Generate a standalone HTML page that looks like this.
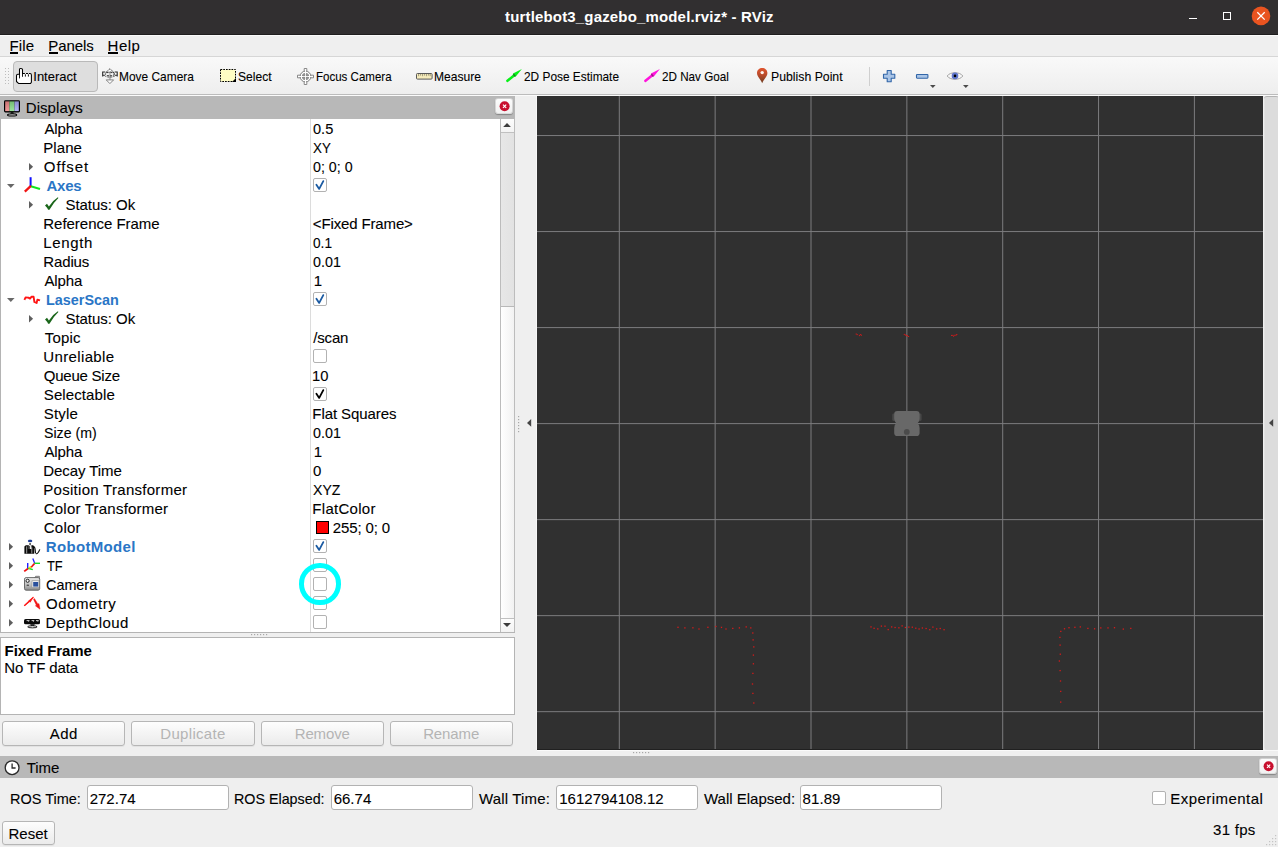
<!DOCTYPE html><html><head><meta charset="utf-8"><title>RViz</title><style>
*{box-sizing:border-box;margin:0;padding:0}
html,body{width:1278px;height:847px;overflow:hidden;background:#efefef;}
body{position:relative;font-family:"Liberation Sans",sans-serif;font-size:15px;color:#000;}
.a{position:absolute;white-space:nowrap;}
.x{position:absolute;white-space:nowrap;height:20px;line-height:20px;-webkit-text-stroke:0.1px currentColor;}
.b{font-weight:bold}
.blue{color:#2a76c6;font-weight:bold}
.cb{position:absolute;width:14px;height:14px;border:1px solid #b2b2b2;border-radius:2px;background:#fff;}
.btn{position:absolute;border:1px solid #b6b6b6;border-radius:3px;background:linear-gradient(#fdfdfd,#ebebeb);box-shadow:0 1px 0 rgba(0,0,0,0.05)}
.inp{position:absolute;border:1px solid #b2b2b2;border-radius:3px;background:#fff;}
svg{position:absolute;overflow:visible}
</style></head><body>
<div class="a" style="left:0;top:0;width:1278px;height:35px;background:#312f30;border-bottom:1px solid #1f1e1e"></div>
<div class="x b" style="top:7px;height:19px;line-height:19px;font-size:15px;left:505.02px;letter-spacing:0.163px;color:#fff;-webkit-text-stroke:0px currentColor;">turtlebot3_gazebo_model.rviz* - RViz</div>
<div class="a" style="left:1188.8px;top:17.6px;width:8.2px;height:1.7px;background:#fff"></div>
<div class="a" style="left:1222.8px;top:11.8px;width:8.4px;height:8.4px;border:1.3px solid #fff"></div>
<svg style="left:1251px;top:6px" width="20" height="20"><circle cx="10" cy="9.9" r="9.3" fill="#e95420"/><path d="M6.3 6.2 L13.7 13.6 M13.7 6.2 L6.3 13.6" stroke="#fff" stroke-width="1.3" fill="none"/></svg>
<div class="a" style="left:0;top:35px;width:1278px;height:22px;background:#efefef;border-top:1px solid #fbfbfb;border-bottom:1px solid #d6d6d6"></div>
<div class="x" style="top:36px;height:19px;line-height:19px;font-size:15px;left:9.57px;letter-spacing:0.142px;">File</div>
<div class="x" style="top:36px;height:19px;line-height:19px;font-size:15px;left:48.37px;letter-spacing:-0.078px;">Panels</div>
<div class="x" style="top:36px;height:19px;line-height:19px;font-size:15px;left:107.57px;letter-spacing:0.504px;">Help</div>
<div class="a" style="left:10px;top:52px;width:8.0px;height:1.9px;background:#000"></div>
<div class="a" style="left:49px;top:52px;width:9.1px;height:1.9px;background:#000"></div>
<div class="a" style="left:108.1px;top:52px;width:9.8px;height:1.9px;background:#000"></div>
<div class="a" style="left:0;top:57px;width:1278px;height:38px;background:linear-gradient(#f9f9f9,#eeeeee);border-bottom:1px solid #bcbcbc"></div>
<div class="a" style="left:0;top:95px;width:1278px;height:1px;background:#fbfbfb"></div>
<div class="a" style="left:5px;top:68px;width:5px;height:17px;background:radial-gradient(circle at 0.5px 0.5px,#bdbdbd 0.6px,transparent 0.9px) 0 0/3px 3px"></div>
<div class="a" style="left:13px;top:61px;width:85px;height:31px;border:1px solid #b9b9b9;border-radius:4px;background:#dedede"></div>
<div class="x" style="top:68px;height:17px;line-height:17px;font-size:13px;left:33.30px;letter-spacing:-0.009px;">Interact</div>
<div class="x" style="top:68px;height:17px;line-height:17px;font-size:13px;left:119.22px;transform:scaleX(0.9172);transform-origin:0 0;">Move Camera</div>
<div class="x" style="top:68px;height:17px;line-height:17px;font-size:13px;left:237.65px;transform:scaleX(0.9310);transform-origin:0 0;">Select</div>
<div class="x" style="top:68px;height:17px;line-height:17px;font-size:13px;left:315.65px;transform:scaleX(0.8862);transform-origin:0 0;">Focus Camera</div>
<div class="x" style="top:68px;height:17px;line-height:17px;font-size:13px;left:433.61px;transform:scaleX(0.9298);transform-origin:0 0;">Measure</div>
<div class="x" style="top:68px;height:17px;line-height:17px;font-size:13px;left:523.80px;transform:scaleX(0.9133);transform-origin:0 0;">2D Pose Estimate</div>
<div class="x" style="top:68px;height:17px;line-height:17px;font-size:13px;left:661.91px;transform:scaleX(0.8985);transform-origin:0 0;">2D Nav Goal</div>
<div class="x" style="top:68px;height:17px;line-height:17px;font-size:13px;left:771.49px;transform:scaleX(0.9435);transform-origin:0 0;">Publish Point</div>
<svg style="left:16px;top:68px" width="16" height="16"><path d="M3.5 6.3 V1.6 Q3.5 0.4 5 0.4 Q6.5 0.4 6.5 1.6 V5.5 H14 Q15.4 5.5 15.4 7 V14.3 L14.6 15.4 H2.5 L0.5 13.5 V7.7 Q0.5 6.3 1.9 6.3 Z" fill="#fff" stroke="#000" stroke-width="1.05" stroke-linejoin="round"/><path d="M3.5 6 V10.4 M6.5 5.5 V8.8 M9.4 6.1 V8.6 M12.4 6.1 V8.6" stroke="#000" stroke-width="0.9"/><path d="M8.9 5.5 H10 M12 5.5 H12.9" stroke="#e4e4e4" stroke-width="1.3"/></svg>
<svg style="left:102px;top:68px" width="17" height="17"><path d="M3.7 4.6 L7.9 0.8 L12.2 4.6 Z" fill="#fdfdfd" stroke="#3c3c3c" stroke-width="1" stroke-linejoin="round" stroke-dasharray="1.5 0.7"/><rect x="6.9" y="4.2" width="2" height="8" fill="#bcbcbc"/><path d="M0.6 3.9 H3 V7.2 H0.6 Z" fill="#fff" stroke="none"/><path d="M3.2 4 H0.7 V8.6 M0.7 7.2 H2.8" fill="none" stroke="#262626" stroke-width="1.1"/><path d="M15.2 3.9 H12.8 V7.2 H15.2 Z" fill="#fff" stroke="none"/><path d="M12.7 4 H15.2 V8.6 M15.2 7.2 H13" fill="none" stroke="#262626" stroke-width="1.1"/><ellipse cx="7.9" cy="5.95" rx="4.7" ry="1.9" fill="none" stroke="#333" stroke-width="1" stroke-dasharray="2.2 0.9"/><path d="M2.5 7.6 C4.6 9.7 11 9.7 13.2 7.6" fill="none" stroke="#505050" stroke-width="0.9" stroke-dasharray="2.2 0.8"/><path d="M4.2 11.9 L7.9 15.6 L11.6 11.9 Z" fill="#fdfdfd" stroke="#858585" stroke-width="1" stroke-linejoin="round"/></svg>
<svg style="left:220px;top:69px" width="16" height="13"><rect x="0.5" y="0.5" width="15" height="12" fill="#fffdc4" stroke="#000" stroke-width="1" stroke-dasharray="1.7 1.05"/><path d="M16 9 L16 13 L12 13 Z" fill="#000"/></svg>
<svg style="left:297px;top:68px" width="17" height="17"><path d="M7.2 0.5 H9.8 V7.2 H16.5 V9.8 H9.8 V16.5 H7.2 V9.8 H0.5 V7.2 H7.2 Z" fill="#fff" stroke="#7c7c7c" stroke-width="0.9"/><circle cx="8.5" cy="8.5" r="5.4" fill="#fcfcfc" stroke="#7c7c7c" stroke-width="1"/><circle cx="8.5" cy="8.5" r="3.5" fill="#747474"/><path d="M8.5 1.2 V15.8 M1.2 8.5 H15.8" stroke="#fff" stroke-width="1.1"/><path d="M6.9 5 V12 M10.1 5 V12 M5 6.9 H12 M5 10.1 H12" stroke="#b0b0b0" stroke-width="0.5"/></svg>
<svg style="left:416px;top:72.7px" width="17" height="7"><rect x="0.5" y="0.5" width="15.6" height="5.6" rx="0.9" fill="#f6ecbc" stroke="#585858" stroke-width="1"/><path d="M2.6 1 V3.2 M4.6 1 V2.6 M6.6 1 V3.2 M8.6 1 V2.6 M10.6 1 V3.2 M12.6 1 V2.6 M14.2 1 V3.2" stroke="#8a8468" stroke-width="0.8"/></svg>
<svg style="left:506px;top:69px" width="16" height="14"><path d="M0.1 11.3 L7.5 5.2 L7 4.6 L15.9 0 L9.6 7.8 L9.1 7.2 L1.7 13.2 Q0 13.4 0.1 11.3 Z" fill="#08f018"/><path d="M7.3 5.1 L9.3 7.5" stroke="#0f7a1c" stroke-width="1.5" stroke-opacity="0.85"/></svg>
<svg style="left:644px;top:69px" width="16" height="14"><path d="M0.1 11.3 L7.5 5.2 L7 4.6 L15.9 0 L9.6 7.8 L9.1 7.2 L1.7 13.2 Q0 13.4 0.1 11.3 Z" fill="#ff14dc"/><path d="M7.3 5.1 L9.3 7.5" stroke="#8a1478" stroke-width="1.5" stroke-opacity="0.85"/></svg>
<svg style="left:756.6px;top:68px" width="11" height="16"><defs><linearGradient id="pg" x1="0" y1="0" x2="0" y2="1"><stop offset="0" stop-color="#e0552f"/><stop offset="0.5" stop-color="#b4492a"/><stop offset="1" stop-color="#6b3a1d"/></linearGradient></defs><path d="M5.2 15.3 C4.2 12 0 9 0 5.1 C0 2 2.4 0 5.2 0 C8 0 10.4 2 10.4 5.1 C10.4 9 6.2 12 5.2 15.3 Z" fill="url(#pg)"/><circle cx="5.2" cy="4.6" r="1.7" fill="#fdf3ee"/></svg>
<svg style="left:882.8px;top:69.8px" width="13" height="13"><path d="M4.2 0.5 H8.2 V4.2 H11.8 V8.2 H8.2 V11.8 H4.2 V8.2 H0.5 V4.2 H4.2 Z" fill="#a9c4e6" stroke="#3266a8" stroke-width="1.1" stroke-linejoin="round"/></svg>
<svg style="left:915.9px;top:73.6px" width="13" height="5"><rect x="0.5" y="0.5" width="11.4" height="3.7" rx="0.6" fill="#a9c4e6" stroke="#3266a8" stroke-width="1.1"/></svg>
<svg style="left:930.2px;top:85px" width="6" height="3"><path d="M0 0 H5.6 L2.8 2.9 Z" fill="#4a4a4a"/></svg>
<svg style="left:963.3px;top:85px" width="6" height="3"><path d="M0 0 H5.6 L2.8 2.9 Z" fill="#4a4a4a"/></svg>
<svg style="left:947px;top:71px" width="16" height="10"><path d="M0.2 5 C3 0.6 13 0.6 15.8 5 C13 9.4 3 9.4 0.2 5 Z" fill="#f6f6f6" stroke="#a4a4a4" stroke-width="1"/><circle cx="8" cy="4.9" r="3.3" fill="#5f76cc"/><circle cx="8" cy="4.9" r="1.3" fill="#000"/></svg>
<div class="a" style="left:869px;top:67px;width:1px;height:19px;background:#cfcfcf"></div>
<div class="a" style="left:0;top:96px;width:515px;height:23px;background:#b8b8b8"></div>
<svg style="left:4px;top:99.6px" width="17" height="17"><defs><linearGradient id="mg" x1="0" y1="0" x2="0" y2="1"><stop offset="0" stop-color="#000" stop-opacity="0.16"/><stop offset="1" stop-color="#fff" stop-opacity="0.14"/></linearGradient></defs><rect x="0" y="0.2" width="16" height="12.2" rx="1.4" fill="#000"/><rect x="1.2" y="1.4" width="4.2" height="9.7" fill="#ee8888"/><rect x="5.4" y="1.4" width="5.1" height="9.7" fill="#8ade8a"/><rect x="10.5" y="1.4" width="4.3" height="9.7" fill="#a6a6f6"/><rect x="1.2" y="1.4" width="13.6" height="9.7" fill="url(#mg)"/><path d="M6.8 12.2 H9.4 L9.8 13.8 H6.4 Z" fill="#000"/><ellipse cx="8.1" cy="14.9" rx="4.6" ry="1.1" fill="#bdbdbd" stroke="#000" stroke-width="1.1"/></svg>
<div class="x" style="top:98px;height:19px;line-height:19px;font-size:15px;left:25.77px;letter-spacing:0.056px;">Displays</div>
<div class="a" style="left:495.2px;top:97.7px;width:17.4px;height:16.6px;border:1px solid rgba(0,0,0,0.13);border-radius:3px;background:linear-gradient(#fcfcfc,#f1f1f1);box-shadow:0 1px 1px rgba(0,0,0,0.28)"></div>
<svg style="left:495.5px;top:97.7px" width="17" height="17"><circle cx="8.6" cy="8.2" r="5" fill="#c8102e"/><path d="M7 6.6 L10.2 9.8 M10.2 6.6 L7 9.8" stroke="#fff" stroke-width="1.2"/></svg>
<div class="a" style="left:0;top:119px;width:515px;height:514px;background:#fff;border:1px solid #b4b4b4;border-top:none"></div>
<div class="a" style="left:310px;top:119px;width:1px;height:513px;background:#dcdcdc"></div>
<div class="a" style="left:500px;top:119px;width:15px;height:513px;background:linear-gradient(90deg,#ffffff,#f2f2f2);border-left:1px solid #bcbcbc;border-right:1px solid #bcbcbc"></div>
<div class="a" style="left:501px;top:119px;width:13px;height:14px;background:linear-gradient(#fdfdfd,#f3f3f3);border-bottom:1px solid #c0c0c0"></div>
<div class="a" style="left:501px;top:618px;width:13px;height:14px;background:linear-gradient(#fdfdfd,#f3f3f3);border-top:1px solid #c0c0c0"></div>
<div class="a" style="left:501px;top:133px;width:13px;height:174px;background:linear-gradient(90deg,#e7e7e7,#e2e2e2);border-bottom:1px solid #b8b8b8"></div>
<svg style="left:501px;top:119px" width="13" height="13"><path d="M2.2 8 L6 4 L9.9 8 Z" fill="#3c3c3c"/></svg>
<svg style="left:501px;top:619px" width="13" height="13"><path d="M2 4 L6 7.9 L10 4 Z" fill="#3c3c3c"/></svg>
<div class="x" style="top:119px;height:19px;line-height:19px;font-size:15px;left:44.47px;letter-spacing:-0.134px;">Alpha</div>
<div class="x" style="top:119px;height:19px;line-height:19px;font-size:15px;left:313.03px;transform:scaleX(0.9727);transform-origin:0 0;">0.5</div>
<div class="x" style="top:138px;height:19px;line-height:19px;font-size:15px;left:43.27px;letter-spacing:0.083px;">Plane</div>
<div class="x" style="top:138px;height:19px;line-height:19px;font-size:15px;left:313.10px;transform:scaleX(0.8892);transform-origin:0 0;">XY</div>
<svg style="left:28.9px;top:162.6px" width="5" height="8"><path d="M0 0 L4.1 3.8 L0 7.6 Z" fill="#5e5e5e"/></svg>
<div class="x" style="top:157px;height:19px;line-height:19px;font-size:15px;left:43.79px;letter-spacing:0.936px;">Offset</div>
<div class="x" style="top:157px;height:19px;line-height:19px;font-size:15px;left:313.04px;transform:scaleX(0.9500);transform-origin:0 0;">0; 0; 0</div>
<svg style="left:7.4px;top:183.6px" width="8" height="5"><path d="M0 0 L7.6 0 L3.8 4 Z" fill="#686868"/></svg>
<svg style="left:24px;top:176px" width="16" height="19"><path d="M6.6 1.2 V10" stroke="#1010ff" stroke-width="2"/><path d="M6.8 10.2 L16 13" stroke="#10e820" stroke-width="2"/><path d="M6.9 9.9 L0.8 15.6" stroke="#f01414" stroke-width="2.3"/></svg>
<div class="x b" style="top:176px;height:19px;line-height:19px;font-size:15px;left:46.43px;letter-spacing:-0.224px;color:#2a76c6;-webkit-text-stroke:0px currentColor;">Axes</div>
<div class="cb" style="left:313px;top:178px"></div>
<svg style="left:313px;top:178px" width="14" height="14"><path d="M3.4 6.7 L6.2 10.9 L10.3 3.1" stroke="#1a5aa2" stroke-width="1.8" fill="none" stroke-linecap="round" stroke-linejoin="round"/></svg>
<svg style="left:28.9px;top:200.6px" width="5" height="8"><path d="M0 0 L4.1 3.8 L0 7.6 Z" fill="#5e5e5e"/></svg>
<svg style="left:44px;top:197px" width="16" height="14"><path d="M1 8.4 L3 6.8 L4.9 9.4 Q8.6 3.6 13.9 0.3 L14.4 0.9 Q9.2 5.8 5.5 12.8 L4.1 12.8 Q3 10.2 1 8.4 Z" fill="#1a661a"/></svg>
<div class="x" style="top:195px;height:19px;line-height:19px;font-size:15px;left:65.42px;letter-spacing:-0.019px;">Status: Ok</div>
<div class="x" style="top:214px;height:19px;line-height:19px;font-size:15px;left:43.27px;letter-spacing:-0.022px;">Reference Frame</div>
<div class="x" style="top:214px;height:19px;line-height:19px;font-size:15px;left:312.86px;letter-spacing:-0.144px;">&lt;Fixed Frame&gt;</div>
<div class="x" style="top:233px;height:19px;line-height:19px;font-size:15px;left:43.27px;letter-spacing:0.625px;">Length</div>
<div class="x" style="top:233px;height:19px;line-height:19px;font-size:15px;left:313.07px;transform:scaleX(0.9112);transform-origin:0 0;">0.1</div>
<div class="x" style="top:252px;height:19px;line-height:19px;font-size:15px;left:43.27px;letter-spacing:-0.124px;">Radius</div>
<div class="x" style="top:252px;height:19px;line-height:19px;font-size:15px;left:313.04px;transform:scaleX(0.9542);transform-origin:0 0;">0.01</div>
<div class="x" style="top:271px;height:19px;line-height:19px;font-size:15px;left:44.47px;letter-spacing:-0.134px;">Alpha</div>
<div class="x" style="top:271px;height:19px;line-height:19px;font-size:15px;left:313.76px;letter-spacing:0.000px;">1</div>
<svg style="left:7.4px;top:297.6px" width="8" height="5"><path d="M0 0 L7.6 0 L3.8 4 Z" fill="#686868"/></svg>
<svg style="left:24px;top:290px" width="16" height="19"><path d="M0.4 9.8 L1.6 7.4 L4.4 7.6 L6 8.6 L7.4 6.8 L9.6 6.8 L10.4 12 L12.6 13 L13.4 9.6 L16 10.4" stroke="#ff1414" stroke-width="1.9" fill="none" stroke-linejoin="round"/></svg>
<div class="x b" style="top:290px;height:19px;line-height:19px;font-size:15px;left:45.84px;transform:scaleX(0.9588);transform-origin:0 0;color:#2a76c6;-webkit-text-stroke:0px currentColor;">LaserScan</div>
<div class="cb" style="left:313px;top:292px"></div>
<svg style="left:313px;top:292px" width="14" height="14"><path d="M3.4 6.7 L6.2 10.9 L10.3 3.1" stroke="#1a5aa2" stroke-width="1.8" fill="none" stroke-linecap="round" stroke-linejoin="round"/></svg>
<svg style="left:28.9px;top:314.6px" width="5" height="8"><path d="M0 0 L4.1 3.8 L0 7.6 Z" fill="#5e5e5e"/></svg>
<svg style="left:44px;top:311px" width="16" height="14"><path d="M1 8.4 L3 6.8 L4.9 9.4 Q8.6 3.6 13.9 0.3 L14.4 0.9 Q9.2 5.8 5.5 12.8 L4.1 12.8 Q3 10.2 1 8.4 Z" fill="#1a661a"/></svg>
<div class="x" style="top:309px;height:19px;line-height:19px;font-size:15px;left:65.42px;letter-spacing:-0.019px;">Status: Ok</div>
<div class="x" style="top:328px;height:19px;line-height:19px;font-size:15px;left:44.66px;letter-spacing:0.229px;">Topic</div>
<div class="x" style="top:328px;height:19px;line-height:19px;font-size:15px;left:313.20px;letter-spacing:-0.144px;">/scan</div>
<div class="x" style="top:347px;height:19px;line-height:19px;font-size:15px;left:43.34px;letter-spacing:0.354px;">Unreliable</div>
<div class="cb" style="left:313px;top:349px"></div>
<div class="x" style="top:366px;height:19px;line-height:19px;font-size:15px;left:43.79px;letter-spacing:-0.234px;">Queue Size</div>
<div class="x" style="top:366px;height:19px;line-height:19px;font-size:15px;left:312.48px;transform:scaleX(0.9829);transform-origin:0 0;">10</div>
<div class="x" style="top:385px;height:19px;line-height:19px;font-size:15px;left:43.82px;letter-spacing:0.100px;">Selectable</div>
<div class="cb" style="left:313px;top:387px"></div>
<svg style="left:313px;top:387px" width="14" height="14"><path d="M3.4 6.7 L6.2 10.9 L10.3 3.1" stroke="#000" stroke-width="1.8" fill="none" stroke-linecap="round" stroke-linejoin="round"/></svg>
<div class="x" style="top:404px;height:19px;line-height:19px;font-size:15px;left:43.82px;letter-spacing:0.175px;">Style</div>
<div class="x" style="top:404px;height:19px;line-height:19px;font-size:15px;left:312.37px;letter-spacing:-0.088px;">Flat Squares</div>
<div class="x" style="top:423px;height:19px;line-height:19px;font-size:15px;left:43.86px;transform:scaleX(0.9424);transform-origin:0 0;">Size (m)</div>
<div class="x" style="top:423px;height:19px;line-height:19px;font-size:15px;left:313.04px;transform:scaleX(0.9542);transform-origin:0 0;">0.01</div>
<div class="x" style="top:442px;height:19px;line-height:19px;font-size:15px;left:44.47px;letter-spacing:-0.134px;">Alpha</div>
<div class="x" style="top:442px;height:19px;line-height:19px;font-size:15px;left:313.76px;letter-spacing:0.000px;">1</div>
<div class="x" style="top:461px;height:19px;line-height:19px;font-size:15px;left:43.27px;letter-spacing:-0.066px;">Decay Time</div>
<div class="x" style="top:461px;height:19px;line-height:19px;font-size:15px;left:313.01px;letter-spacing:0.000px;">0</div>
<div class="x" style="top:480px;height:19px;line-height:19px;font-size:15px;left:43.27px;letter-spacing:0.284px;">Position Transformer</div>
<div class="x" style="top:480px;height:19px;line-height:19px;font-size:15px;left:313.08px;transform:scaleX(0.9377);transform-origin:0 0;">XYZ</div>
<div class="x" style="top:499px;height:19px;line-height:19px;font-size:15px;left:43.74px;letter-spacing:0.215px;">Color Transformer</div>
<div class="x" style="top:499px;height:19px;line-height:19px;font-size:15px;left:312.37px;letter-spacing:0.279px;">FlatColor</div>
<div class="x" style="top:518px;height:19px;line-height:19px;font-size:15px;left:43.84px;letter-spacing:0.192px;">Color</div>
<div class="a" style="left:316px;top:521px;width:13px;height:13px;background:#ff0000;border:1px solid #000"></div>
<div class="x" style="top:518px;height:19px;line-height:19px;font-size:15px;left:332.85px;letter-spacing:-0.143px;">255; 0; 0</div>
<svg style="left:9.1px;top:542.6px" width="5" height="8"><path d="M0 0 L4.1 3.8 L0 7.6 Z" fill="#5e5e5e"/></svg>
<svg style="left:24px;top:537px" width="16" height="19"><ellipse cx="6.1" cy="3.9" rx="2.3" ry="1.9" fill="#dfe6f2"/><ellipse cx="6.1" cy="3.9" rx="2.2" ry="1.2" fill="#1c3c96"/><rect x="5.2" y="5.9" width="1.8" height="2.2" fill="#666"/><path d="M0.4 16.8 V9.6 L1.8 8.2 H9.2 L10.2 9.6 V16.8 Z" fill="#0a0a0a"/><path d="M2.7 9.4 V16.4 M7.8 10.4 V16.4" stroke="#fff" stroke-width="0.6"/><path d="M4.8 8.2 H7.4 V12 H4.8 Z" fill="#fff"/><path d="M5.6 9 V12" stroke="#111" stroke-width="0.8"/><path d="M10 9.8 C11.6 10.6 11 14.6 11.6 16.4" stroke="#111" stroke-width="1.2" fill="none"/><path d="M12 16.7 C13.6 17.1 15 14.4 15.8 12.4" stroke="#111" stroke-width="1.2" fill="none"/></svg>
<div class="x b" style="top:537px;height:19px;line-height:19px;font-size:15px;left:45.80px;letter-spacing:0.324px;color:#2a76c6;-webkit-text-stroke:0px currentColor;">RobotModel</div>
<div class="cb" style="left:313px;top:539px"></div>
<svg style="left:313px;top:539px" width="14" height="14"><path d="M3.4 6.7 L6.2 10.9 L10.3 3.1" stroke="#1a5aa2" stroke-width="1.8" fill="none" stroke-linecap="round" stroke-linejoin="round"/></svg>
<svg style="left:9.1px;top:561.6px" width="5" height="8"><path d="M0 0 L4.1 3.8 L0 7.6 Z" fill="#5e5e5e"/></svg>
<svg style="left:24px;top:556px" width="16" height="19"><path d="M0.2 15.4 L4.4 12.2" stroke="#f01010" stroke-width="1.8"/><path d="M3.7 7 V12.2" stroke="#2020ff" stroke-width="1.4"/><path d="M4.2 12.2 L8.8 13.6" stroke="#14e020" stroke-width="1.5"/><path d="M4.6 12 L7.2 10.8" stroke="#f0e010" stroke-width="1.6"/><path d="M7.2 11.2 L10.6 7.4" stroke="#f01010" stroke-width="1.6"/><path d="M8.8 2.4 L10.6 7" stroke="#2020ff" stroke-width="1.3"/><path d="M10.4 7.3 H16" stroke="#14e020" stroke-width="1.4"/></svg>
<div class="x" style="top:556px;height:19px;line-height:19px;font-size:15px;left:46.81px;transform:scaleX(0.8569);transform-origin:0 0;">TF</div>
<div class="cb" style="left:313px;top:558px"></div>
<svg style="left:9.1px;top:580.6px" width="5" height="8"><path d="M0 0 L4.1 3.8 L0 7.6 Z" fill="#5e5e5e"/></svg>
<svg style="left:24px;top:575px" width="16" height="19"><defs><linearGradient id="cg" x1="0" y1="0" x2="0" y2="1"><stop offset="0" stop-color="#ececec"/><stop offset="0.6" stop-color="#bdbdbd"/><stop offset="1" stop-color="#8a8a8a"/></linearGradient></defs><path d="M10.6 3 L11.6 1.3 H15.4 V4 Z" fill="#d0d0d0" stroke="#666" stroke-width="0.8"/><rect x="0.5" y="2.6" width="15.2" height="12.6" rx="1.6" fill="url(#cg)" stroke="#5c5c5c" stroke-width="0.9"/><rect x="8" y="5.8" width="7" height="6.8" fill="#f4f4f4" stroke="#8a8a8a" stroke-width="0.6"/><rect x="9.2" y="7" width="5" height="4.6" fill="#2a4f9c"/><circle cx="3.6" cy="5.8" r="1.6" fill="#f2f2f2" stroke="#222" stroke-width="1"/><rect x="2.6" y="9.4" width="2.4" height="1.6" rx="0.6" fill="#555"/></svg>
<div class="x" style="top:575px;height:19px;line-height:19px;font-size:15px;left:46.07px;transform:scaleX(0.9584);transform-origin:0 0;">Camera</div>
<div class="cb" style="left:313px;top:577px"></div>
<svg style="left:9.1px;top:599.6px" width="5" height="8"><path d="M0 0 L4.1 3.8 L0 7.6 Z" fill="#5e5e5e"/></svg>
<svg style="left:24px;top:594px" width="16" height="19"><path d="M0.2 11.4 L5 7.4 L4.4 6.7 L10 2.4 L6.4 8.6 L5.7 7.9 L0.8 12 Z" fill="#ff1a1a"/><path d="M0.2 11.7 L9.4 3.2" stroke="#ff1a1a" stroke-width="1.2"/><path d="M10.4 4.6 L14 10.2 L14.9 9.6 L16 15.2 L11.4 11.8 L12.4 11.2 L9.6 5.4 Z" fill="#f01515" stroke="#f01515" stroke-width="0.5"/></svg>
<div class="x" style="top:594px;height:19px;line-height:19px;font-size:15px;left:46.09px;letter-spacing:0.541px;">Odometry</div>
<div class="cb" style="left:313px;top:596px"></div>
<svg style="left:9.1px;top:618.6px" width="5" height="8"><path d="M0 0 L4.1 3.8 L0 7.6 Z" fill="#5e5e5e"/></svg>
<svg style="left:24px;top:613px" width="16" height="19"><rect x="0" y="5.9" width="16" height="5.4" rx="1.6" fill="#0a0a0a"/><path d="M2.6 7.6 H5.2 L4.6 8.6 M7.6 7.6 H10 L9.4 8.6 M12 7.6 H14.4 L13.8 8.6" stroke="#fff" stroke-width="0.8" fill="none"/><path d="M6.2 11.3 H10.8 L10 12.9 H7 Z" fill="#0a0a0a"/><ellipse cx="8.4" cy="13.8" rx="4.7" ry="1.05" fill="#fff" stroke="#0a0a0a" stroke-width="0.9"/></svg>
<div class="x" style="top:613px;height:19px;line-height:19px;font-size:15px;left:45.57px;letter-spacing:0.387px;">DepthCloud</div>
<div class="cb" style="left:313px;top:615px"></div>
<div class="a" style="left:299.4px;top:563.4px;width:41.4px;height:41.4px;border-radius:50%;border:5.6px solid #00ffff"></div>
<svg style="left:250.5px;top:633.7px" width="18" height="2"><rect x="0" y="0" width="1.2" height="1.2" fill="#a8a8a8"/><rect x="3" y="0" width="1.2" height="1.2" fill="#a8a8a8"/><rect x="6" y="0" width="1.2" height="1.2" fill="#a8a8a8"/><rect x="9" y="0" width="1.2" height="1.2" fill="#a8a8a8"/><rect x="12" y="0" width="1.2" height="1.2" fill="#a8a8a8"/><rect x="15" y="0" width="1.2" height="1.2" fill="#a8a8a8"/></svg>
<svg style="left:518px;top:416px" width="2" height="18"><rect x="0" y="0" width="1.2" height="1.2" fill="#a8a8a8"/><rect x="0" y="3" width="1.2" height="1.2" fill="#a8a8a8"/><rect x="0" y="6" width="1.2" height="1.2" fill="#a8a8a8"/><rect x="0" y="9" width="1.2" height="1.2" fill="#a8a8a8"/><rect x="0" y="12" width="1.2" height="1.2" fill="#a8a8a8"/><rect x="0" y="15" width="1.2" height="1.2" fill="#a8a8a8"/></svg>
<svg style="left:633px;top:751.9px" width="18" height="2"><rect x="0" y="0" width="1.2" height="1.2" fill="#a8a8a8"/><rect x="3" y="0" width="1.2" height="1.2" fill="#a8a8a8"/><rect x="6" y="0" width="1.2" height="1.2" fill="#a8a8a8"/><rect x="9" y="0" width="1.2" height="1.2" fill="#a8a8a8"/><rect x="12" y="0" width="1.2" height="1.2" fill="#a8a8a8"/><rect x="15" y="0" width="1.2" height="1.2" fill="#a8a8a8"/></svg>
<div class="a" style="left:0;top:637px;width:515px;height:78px;background:#fff;border:1px solid #b4b4b4"></div>
<div class="x b" style="top:641px;height:19px;line-height:19px;font-size:15px;left:4.60px;letter-spacing:-0.115px;-webkit-text-stroke:0px currentColor;">Fixed Frame</div>
<div class="x" style="top:658px;height:19px;line-height:19px;font-size:15px;left:4.37px;letter-spacing:-0.103px;">No TF data</div>
<div class="btn" style="left:2px;top:721px;width:123px;height:25px"></div>
<div class="x" style="top:724px;height:19px;line-height:19px;font-size:15px;left:49.67px;letter-spacing:0.553px;">Add</div>
<div class="btn" style="left:131px;top:721px;width:124px;height:25px"></div>
<div class="x" style="top:724px;height:19px;line-height:19px;font-size:15px;left:160.37px;letter-spacing:0.295px;color:#b4b4b4;-webkit-text-stroke:0px currentColor;">Duplicate</div>
<div class="btn" style="left:261px;top:721px;width:123px;height:25px"></div>
<div class="x" style="top:724px;height:19px;line-height:19px;font-size:15px;left:294.67px;letter-spacing:-0.112px;color:#b4b4b4;-webkit-text-stroke:0px currentColor;">Remove</div>
<div class="btn" style="left:390px;top:721px;width:123px;height:25px"></div>
<div class="x" style="top:724px;height:19px;line-height:19px;font-size:15px;left:423.17px;letter-spacing:-0.120px;color:#b4b4b4;-webkit-text-stroke:0px currentColor;">Rename</div>
<div class="a" style="left:536px;top:96px;width:1px;height:654px;background:#f7f7f7"></div>
<div class="a" style="left:537px;top:96px;width:726px;height:654px;background:#303030;overflow:hidden;border-bottom:1px solid #202020">
<svg style="left:0;top:0" width="726" height="654"><rect x="81.80" y="0" width="1" height="654" fill="#7c7c7e"/><rect x="177.65" y="0" width="1" height="654" fill="#7c7c7e"/><rect x="273.50" y="0" width="1" height="654" fill="#7c7c7e"/><rect x="369.35" y="0" width="1" height="654" fill="#7c7c7e"/><rect x="465.20" y="0" width="1" height="654" fill="#7c7c7e"/><rect x="561.05" y="0" width="1" height="654" fill="#7c7c7e"/><rect x="656.90" y="0" width="1" height="654" fill="#7c7c7e"/><rect x="0" y="39.04" width="726" height="1" fill="#7c7c7e"/><rect x="0" y="135.06" width="726" height="1" fill="#7c7c7e"/><rect x="0" y="231.08" width="726" height="1" fill="#7c7c7e"/><rect x="0" y="327.10" width="726" height="1" fill="#7c7c7e"/><rect x="0" y="423.12" width="726" height="1" fill="#7c7c7e"/><rect x="0" y="519.14" width="726" height="1" fill="#7c7c7e"/><rect x="0" y="615.16" width="726" height="1" fill="#7c7c7e"/><rect x="355.20000000000005" y="317.6" width="3" height="7.4" rx="1.4" fill="#474747"/><rect x="381.6" y="317.6" width="3" height="7.4" rx="1.4" fill="#474747"/><path d="M360.4 314.9 H379.4 Q382.6 314.9 382.6 318 V322.4 Q382.6 325.6 380.6 327.2 Q382.6 328.8 382.6 332 V337 Q382.6 340.1 379.4 340.1 H360.4 Q357.20000000000005 340.1 357.20000000000005 337 V332 Q357.20000000000005 328.8 359.20000000000005 327.2 Q357.20000000000005 325.6 357.20000000000005 322.4 V318 Q357.20000000000005 314.9 360.4 314.9 Z" fill="#686868"/><circle cx="369.79999999999995" cy="335.9" r="2.9" fill="#4b4b4b"/><rect x="318.68" y="237.47" width="1.05" height="1.05" fill="#d81a1a"/><rect x="319.68" y="238.08" width="1.05" height="1.05" fill="#d81a1a"/><rect x="321.88" y="239.08" width="1.05" height="1.05" fill="#d81a1a"/><rect x="322.88" y="238.08" width="1.05" height="1.05" fill="#d81a1a"/><rect x="323.88" y="238.67" width="1.05" height="1.05" fill="#d81a1a"/><rect x="366.77" y="237.87" width="1.05" height="1.05" fill="#d81a1a"/><rect x="367.88" y="238.47" width="1.05" height="1.05" fill="#d81a1a"/><rect x="368.88" y="239.17" width="1.05" height="1.05" fill="#d81a1a"/><rect x="369.88" y="239.08" width="1.05" height="1.05" fill="#d81a1a"/><rect x="371.08" y="239.97" width="1.05" height="1.05" fill="#d81a1a"/><rect x="414.08" y="238.87" width="1.05" height="1.05" fill="#d81a1a"/><rect x="415.27" y="238.87" width="1.05" height="1.05" fill="#d81a1a"/><rect x="416.08" y="239.67" width="1.05" height="1.05" fill="#d81a1a"/><rect x="417.27" y="238.78" width="1.05" height="1.05" fill="#d81a1a"/><rect x="418.48" y="238.67" width="1.05" height="1.05" fill="#d81a1a"/><rect x="419.27" y="237.97" width="1.05" height="1.05" fill="#d81a1a"/><rect x="140.35" y="530.65" width="1.3" height="1.3" fill="#d81a1a"/><rect x="147.25" y="531.25" width="1.3" height="1.3" fill="#d81a1a"/><rect x="155.25" y="531.15" width="1.3" height="1.3" fill="#d81a1a"/><rect x="161.35" y="532.35" width="1.3" height="1.3" fill="#d81a1a"/><rect x="170.25" y="530.65" width="1.3" height="1.3" fill="#d81a1a"/><rect x="178.25" y="529.85" width="1.3" height="1.3" fill="#d81a1a"/><rect x="183.85" y="530.75" width="1.3" height="1.3" fill="#d81a1a"/><rect x="188.35" y="532.35" width="1.3" height="1.3" fill="#d81a1a"/><rect x="195.15" y="531.75" width="1.3" height="1.3" fill="#d81a1a"/><rect x="201.75" y="531.25" width="1.3" height="1.3" fill="#d81a1a"/><rect x="208.55" y="530.25" width="1.3" height="1.3" fill="#d81a1a"/><rect x="213.15" y="531.25" width="1.3" height="1.3" fill="#d81a1a"/><rect x="215.15" y="536.35" width="1.3" height="1.3" fill="#d81a1a"/><rect x="215.45" y="543.25" width="1.3" height="1.3" fill="#d81a1a"/><rect x="216.15" y="550.25" width="1.3" height="1.3" fill="#d81a1a"/><rect x="215.75" y="558.45" width="1.3" height="1.3" fill="#d81a1a"/><rect x="215.75" y="567.15" width="1.3" height="1.3" fill="#d81a1a"/><rect x="215.25" y="576.75" width="1.3" height="1.3" fill="#d81a1a"/><rect x="214.85" y="587.35" width="1.3" height="1.3" fill="#d81a1a"/><rect x="215.25" y="596.75" width="1.3" height="1.3" fill="#d81a1a"/><rect x="216.15" y="606.35" width="1.3" height="1.3" fill="#d81a1a"/><rect x="333.35" y="530.25" width="1.3" height="1.3" fill="#d81a1a"/><rect x="336.45" y="531.65" width="1.3" height="1.3" fill="#d81a1a"/><rect x="340.15" y="532.25" width="1.3" height="1.3" fill="#d81a1a"/><rect x="343.75" y="529.45" width="1.3" height="1.3" fill="#d81a1a"/><rect x="347.35" y="529.55" width="1.3" height="1.3" fill="#d81a1a"/><rect x="350.55" y="532.95" width="1.3" height="1.3" fill="#d81a1a"/><rect x="354.05" y="530.25" width="1.3" height="1.3" fill="#d81a1a"/><rect x="357.45" y="530.85" width="1.3" height="1.3" fill="#d81a1a"/><rect x="361.25" y="531.15" width="1.3" height="1.3" fill="#d81a1a"/><rect x="364.45" y="529.25" width="1.3" height="1.3" fill="#d81a1a"/><rect x="367.75" y="530.85" width="1.3" height="1.3" fill="#d81a1a"/><rect x="371.25" y="530.45" width="1.3" height="1.3" fill="#d81a1a"/><rect x="374.65" y="530.55" width="1.3" height="1.3" fill="#d81a1a"/><rect x="378.15" y="531.55" width="1.3" height="1.3" fill="#d81a1a"/><rect x="381.45" y="532.35" width="1.3" height="1.3" fill="#d81a1a"/><rect x="384.75" y="531.35" width="1.3" height="1.3" fill="#d81a1a"/><rect x="388.45" y="531.85" width="1.3" height="1.3" fill="#d81a1a"/><rect x="392.15" y="533.05" width="1.3" height="1.3" fill="#d81a1a"/><rect x="395.25" y="530.45" width="1.3" height="1.3" fill="#d81a1a"/><rect x="399.05" y="532.25" width="1.3" height="1.3" fill="#d81a1a"/><rect x="402.55" y="531.85" width="1.3" height="1.3" fill="#d81a1a"/><rect x="406.45" y="533.05" width="1.3" height="1.3" fill="#d81a1a"/><rect x="526.85" y="532.15" width="1.3" height="1.3" fill="#d81a1a"/><rect x="531.35" y="531.05" width="1.3" height="1.3" fill="#d81a1a"/><rect x="537.25" y="530.65" width="1.3" height="1.3" fill="#d81a1a"/><rect x="542.65" y="530.25" width="1.3" height="1.3" fill="#d81a1a"/><rect x="550.25" y="531.75" width="1.3" height="1.3" fill="#d81a1a"/><rect x="556.95" y="532.15" width="1.3" height="1.3" fill="#d81a1a"/><rect x="563.15" y="531.25" width="1.3" height="1.3" fill="#d81a1a"/><rect x="570.35" y="531.25" width="1.3" height="1.3" fill="#d81a1a"/><rect x="576.85" y="531.05" width="1.3" height="1.3" fill="#d81a1a"/><rect x="585.65" y="532.45" width="1.3" height="1.3" fill="#d81a1a"/><rect x="593.15" y="531.75" width="1.3" height="1.3" fill="#d81a1a"/><rect x="523.15" y="534.75" width="1.3" height="1.3" fill="#d81a1a"/><rect x="522.25" y="540.75" width="1.3" height="1.3" fill="#d81a1a"/><rect x="522.45" y="548.45" width="1.3" height="1.3" fill="#d81a1a"/><rect x="522.65" y="557.55" width="1.3" height="1.3" fill="#d81a1a"/><rect x="521.75" y="564.35" width="1.3" height="1.3" fill="#d81a1a"/><rect x="522.45" y="573.95" width="1.3" height="1.3" fill="#d81a1a"/><rect x="522.85" y="584.35" width="1.3" height="1.3" fill="#d81a1a"/><rect x="523.05" y="594.75" width="1.3" height="1.3" fill="#d81a1a"/><rect x="523.05" y="605.45" width="1.3" height="1.3" fill="#d81a1a"/></svg>
</div>
<div class="a" style="left:537px;top:750px;width:741px;height:1px;background:#fafafa"></div>
<div class="a" style="left:1264px;top:96px;width:15px;height:654px;background:linear-gradient(90deg,#e6e6e6 0,#dcdcdc 1.5px);border-top:1px solid #b4b4b4;border-radius:3px 3px 3px 3px"></div>
<svg style="left:527px;top:419px" width="5" height="8"><path d="M4.2 0 L0 3.9 L4.2 7.8 Z" fill="#454545"/></svg>
<svg style="left:1269px;top:419px" width="5" height="8"><path d="M4.2 0 L0 3.9 L4.2 7.8 Z" fill="#454545"/></svg>
<div class="a" style="left:0;top:756px;width:1278px;height:22px;background:#b8b8b8"></div>
<svg style="left:4px;top:760px" width="16" height="16"><circle cx="8.1" cy="7.7" r="6.9" fill="#fff" stroke="#2a2a2a" stroke-width="1.3"/><path d="M8.1 3.6 V8 H11.6" stroke="#2a2a2a" stroke-width="1.3" fill="none"/></svg>
<div class="x" style="top:758px;height:19px;line-height:19px;font-size:15px;left:26.66px;letter-spacing:-0.024px;">Time</div>
<div class="a" style="left:1259.4px;top:757.7px;width:17.4px;height:16.6px;border:1px solid rgba(0,0,0,0.13);border-radius:3px;background:linear-gradient(#fcfcfc,#f1f1f1);box-shadow:0 1px 1px rgba(0,0,0,0.28)"></div>
<svg style="left:1259.7px;top:757.7px" width="17" height="17"><circle cx="8.6" cy="8.2" r="5" fill="#c8102e"/><path d="M7 6.6 L10.2 9.8 M10.2 6.6 L7 9.8" stroke="#fff" stroke-width="1.2"/></svg>
<div class="x" style="top:789px;height:19px;line-height:19px;font-size:15px;left:10.41px;transform:scaleX(0.9654);transform-origin:0 0;">ROS Time:</div>
<div class="inp" style="left:87px;top:785px;width:142px;height:25px"></div>
<div class="x" style="top:789px;height:19px;line-height:19px;font-size:15px;left:89.65px;letter-spacing:0.023px;">272.74</div>
<div class="x" style="top:789px;height:19px;line-height:19px;font-size:15px;left:234.43px;transform:scaleX(0.9530);transform-origin:0 0;">ROS Elapsed:</div>
<div class="inp" style="left:331px;top:785px;width:142px;height:25px"></div>
<div class="x" style="top:789px;height:19px;line-height:19px;font-size:15px;left:333.64px;letter-spacing:0.016px;">66.74</div>
<div class="x" style="top:789px;height:19px;line-height:19px;font-size:15px;left:479.03px;letter-spacing:0.165px;">Wall Time:</div>
<div class="inp" style="left:556px;top:785px;width:142px;height:25px"></div>
<div class="x" style="top:789px;height:19px;line-height:19px;font-size:15px;left:559.26px;letter-spacing:0.010px;">1612794108.12</div>
<div class="x" style="top:789px;height:19px;line-height:19px;font-size:15px;left:704.03px;letter-spacing:-0.010px;">Wall Elapsed:</div>
<div class="inp" style="left:800px;top:785px;width:142px;height:25px"></div>
<div class="x" style="top:789px;height:19px;line-height:19px;font-size:15px;left:802.55px;letter-spacing:0.081px;">81.89</div>
<div class="cb" style="left:1152px;top:791px"></div>
<div class="x" style="top:789px;height:19px;line-height:19px;font-size:15px;left:1170.27px;letter-spacing:0.454px;">Experimental</div>
<div class="btn" style="left:2px;top:821px;width:53px;height:24px"></div>
<div class="x" style="top:824px;height:19px;line-height:19px;font-size:15px;left:8.57px;letter-spacing:-0.036px;">Reset</div>
<div class="x" style="top:820px;height:19px;line-height:19px;font-size:15px;left:1213.03px;letter-spacing:0.290px;">31 fps</div>
<svg style="left:1266px;top:835px" width="12" height="12"><rect x="9" y="0" width="1.2" height="1.2" fill="#c4c4c4"/><rect x="6" y="3" width="1.2" height="1.2" fill="#c4c4c4"/><rect x="9" y="3" width="1.2" height="1.2" fill="#c4c4c4"/><rect x="3" y="6" width="1.2" height="1.2" fill="#c4c4c4"/><rect x="6" y="6" width="1.2" height="1.2" fill="#c4c4c4"/><rect x="9" y="6" width="1.2" height="1.2" fill="#c4c4c4"/><rect x="0" y="9" width="1.2" height="1.2" fill="#c4c4c4"/><rect x="3" y="9" width="1.2" height="1.2" fill="#c4c4c4"/><rect x="6" y="9" width="1.2" height="1.2" fill="#c4c4c4"/><rect x="9" y="9" width="1.2" height="1.2" fill="#c4c4c4"/></svg>
</body></html>
